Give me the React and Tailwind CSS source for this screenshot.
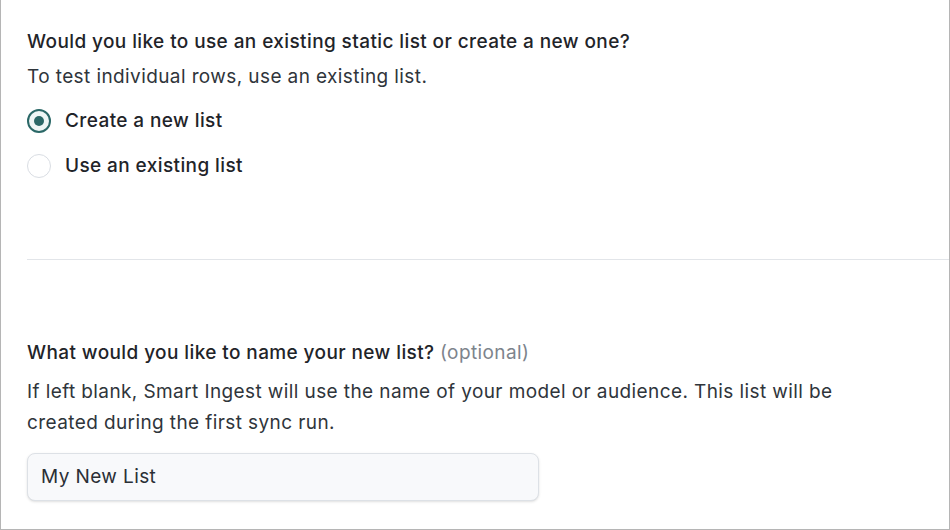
export default function App() {
  return (
    <div className="w-[950px] h-[530px] border border-t-0 border-[#b5b5b5] bg-white overflow-hidden text-[#1f2429] tracking-[0.4px]" style={{ fontFamily: "Inter, 'Noto Sans', sans-serif" }}>
      <div className="pl-[26px] pt-[28px] pr-[60px]">
        <div className="text-[19px] leading-[28px] font-medium">Would you like to use an existing static list or create a new one?</div>
        <div className="text-[19px] leading-[28px] mt-[7px] text-[#2f353b]">To test individual rows, use an existing list.</div>
        <div className="mt-[17px] flex flex-col gap-[19px]">
          <label className="flex items-center gap-[14px] text-[19px] leading-[26px] font-medium">
            <span className="w-[24px] h-[24px] rounded-full border-2 border-[#2b6867] bg-[#eef6f5] flex items-center justify-center">
              <span className="w-[10px] h-[10px] rounded-full bg-[#2b6867]" />
            </span>
            Create a new list
          </label>
          <label className="flex items-center gap-[14px] text-[19px] leading-[26px] font-medium">
            <span className="w-[24px] h-[24px] rounded-full border border-[#d9dde3] bg-white" />
            Use an existing list
          </label>
        </div>
        <div className="mt-[80px] -mr-[60px] border-t border-[#e2e5e9]" />
        <div className="mt-[79px] text-[19px] leading-[28px] font-medium">
          What would you like to name your new list? <span className="font-normal text-[#7d848c]">(optional)</span>
        </div>
        <div className="text-[19px] leading-[31px] mt-[9px] text-[#2f353b]">
          If left blank, Smart Ingest will use the name of your model or audience. This list will be created during the first sync run.
        </div>
        <div className="mt-[15px] w-[512px] h-[48px] rounded-[8px] border border-[#dde1e6] bg-[#f8f9fb] shadow-sm flex items-center px-[13px] text-[19px] text-[#2a2f35]">
          My New List
        </div>
      </div>
    </div>
  );
}
